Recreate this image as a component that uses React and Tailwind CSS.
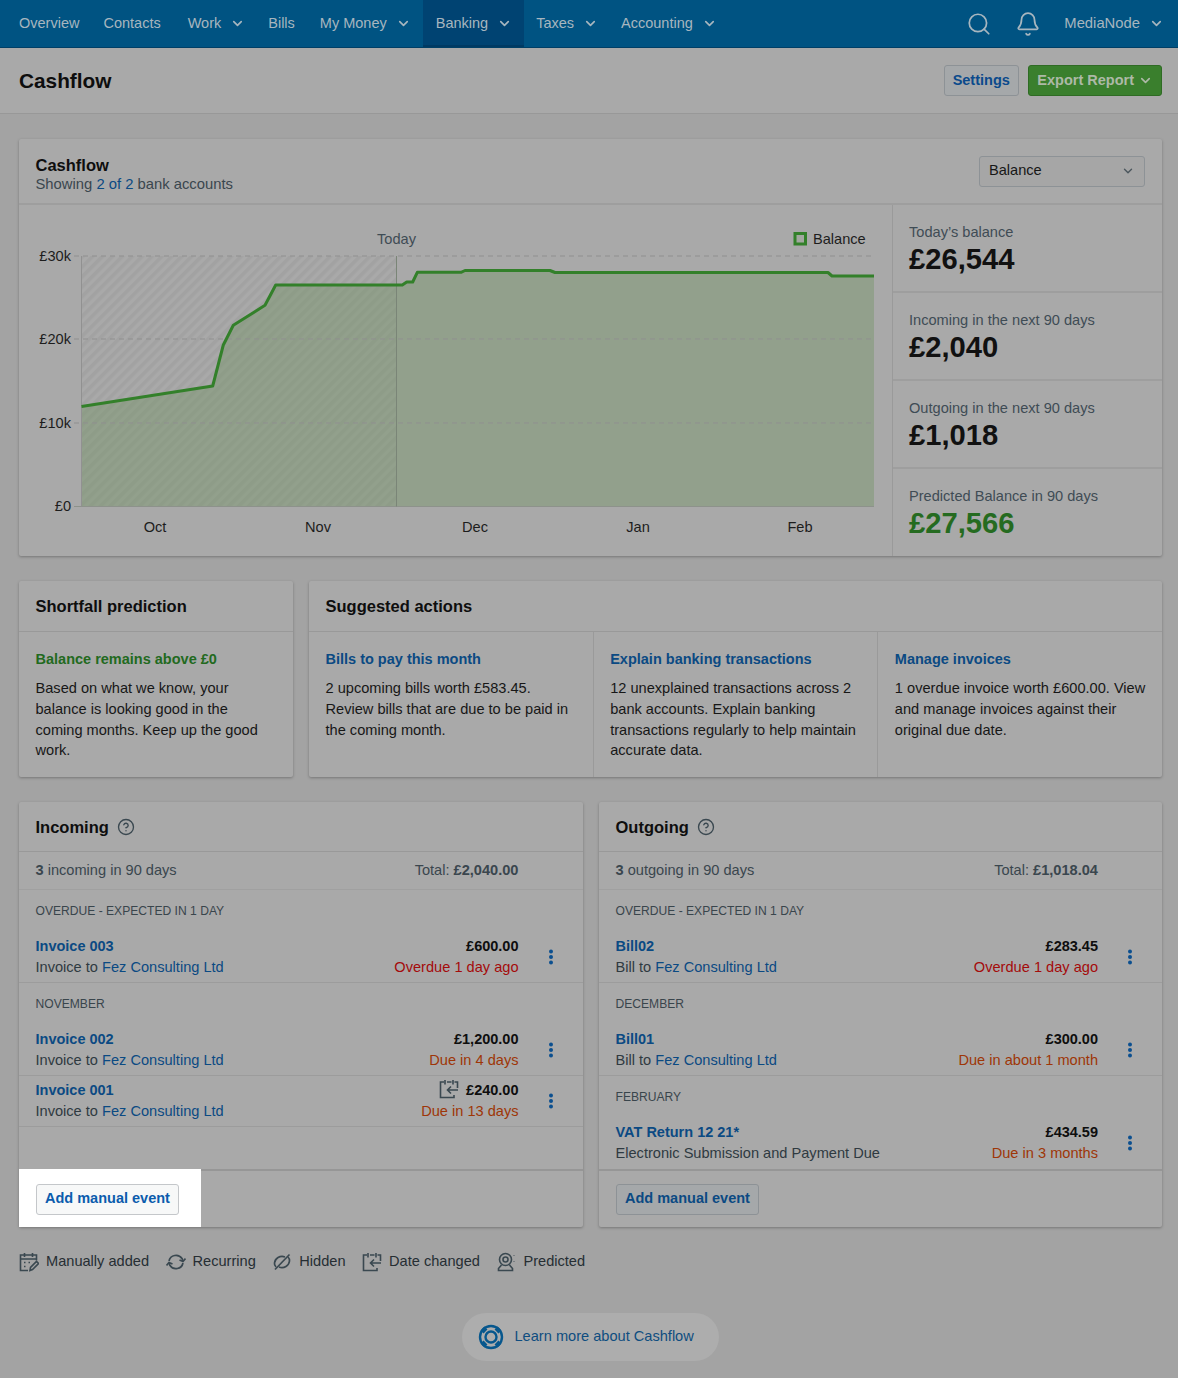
import React from "react";
import { ChevronDown, Search, Bell, CircleHelp } from "lucide-react";

const Chev = ({ className = "" }) => (
  <ChevronDown className={`w-[15px] h-[15px] ${className}`} strokeWidth={2.6} />
);

const NavItem = ({ label, chevron, active, className = "" }) => (
  <div className={`flex items-center h-full px-[12.5px] ${active ? "bg-[#004372] shadow-[inset_0_-2px_0_#003a63]" : ""} ${className}`}>
    <span>{label}</span>
    {chevron && <Chev className="ml-[9px] -mr-[2px]" />}
  </div>
);

const Card = ({ className = "", children }) => (
  <div className={`bg-[#a9a9a9] rounded-[2px] shadow-[0_1px_3px_rgba(0,0,0,0.28)] ${className}`}>{children}</div>
);

const Stat = ({ label, value, green, last, className = "flex-1" }) => (
  <div className={`${className} px-4 pt-[18px] ${last ? "" : "border-b-2 border-[#9e9e9e]"}`}>
    <div className="leading-[18px] text-[#3f4c55]">{label}</div>
    <div className={`text-[29.2px] leading-[36px] font-bold ${green ? "text-[#256b20]" : "text-[#111]"}`}>{value}</div>
  </div>
);

const chartText = "fill-[#1d1d1d] text-[14.6px]";

const CashflowChart = () => (
  <svg viewBox="19 205 873 351" className="block w-[873px] h-[351px]" style={{ fontFamily: "Liberation Sans, Arial, sans-serif" }}>
    <defs>
      <pattern id="hatch" width="7" height="7" patternUnits="userSpaceOnUse" patternTransform="rotate(45)">
        <rect width="3.5" height="7" fill="#000" fillOpacity="0.045" />
      </pattern>
    </defs>
    <rect x="81.5" y="256" width="315" height="250.5" fill="url(#hatch)" />
    <path
      d="M81.5 406.5L212.7 386L223.3 345L233.3 325.3L265 305.3L275.7 285L402.3 285L406.7 282L412.7 282L417.3 272.3L461 272.3L465 270.5L550 270.5L555 272.5L828 272.5L832 276L874 276L874 506.5L81.5 506.5Z"
      fill="#739464"
      fillOpacity="0.42"
    />
    {[256, 339, 423].map((y) => (
      <line key={y} x1="74" x2="874" y1={y} y2={y} stroke="#8f8f8f" strokeDasharray="5 4" />
    ))}
    <line x1="74" x2="874" y1="506.5" y2="506.5" stroke="#8d928b" />
    <line x1="81.5" x2="81.5" y1="256" y2="506.5" stroke="#919191" />
    <line x1="396.5" x2="396.5" y1="256" y2="506.5" stroke="#7a8577" />
    <path
      d="M81.5 406.5L212.7 386L223.3 345L233.3 325.3L265 305.3L275.7 285L402.3 285L406.7 282L412.7 282L417.3 272.3L461 272.3L465 270.5L550 270.5L555 272.5L828 272.5L832 276L874 276"
      fill="none"
      stroke="#33802a"
      strokeWidth="3"
      strokeLinejoin="round"
    />
    <text x="71" y="261" textAnchor="end" className={chartText}>£30k</text>
    <text x="71" y="344" textAnchor="end" className={chartText}>£20k</text>
    <text x="71" y="428" textAnchor="end" className={chartText}>£10k</text>
    <text x="71" y="511" textAnchor="end" className={chartText}>£0</text>
    <text x="396.5" y="244" textAnchor="middle" className="fill-[#3f4c55] text-[14.6px]">Today</text>
    <rect x="795" y="233.5" width="10.5" height="10.5" fill="#a3a8a0" stroke="#33802a" strokeWidth="3" />
    <text x="813" y="244" className={chartText}>Balance</text>
    {[["Oct", 155], ["Nov", 318], ["Dec", 475], ["Jan", 638], ["Feb", 800]].map(([m, x]) => (
      <text key={m} x={x} y="532" textAnchor="middle" className={chartText}>{m}</text>
    ))}
  </svg>
);

const Action = ({ title, text, green, border, className = "" }) => (
  <div className={`flex-1 pl-[16.5px] pr-4 pt-[17px] pb-[16px] ${border ? "border-l border-[#9a9a9a]" : ""} ${className}`}>
    <div className={`text-[14.5px] leading-[21px] font-bold ${green ? "text-[#226a1e]" : "text-[#0b4a83]"}`}>{title}</div>
    <p className="mt-[8px] leading-[20.8px] text-[#171717]">{text}</p>
  </div>
);

const Dots = () => (
  <svg viewBox="0 0 6 16" className="w-[6px] h-[16px] fill-[#0b4f8f]">
    <circle cx="3" cy="2.5" r="2" />
    <circle cx="3" cy="8" r="2" />
    <circle cx="3" cy="13.5" r="2" />
  </svg>
);

const CalendarChange = ({ className = "" }) => (
  <svg viewBox="0 0 20 20" fill="none" stroke="#3a4850" strokeWidth="1.6" className={className}>
    <path d="M5 3H1.5v15.500H15V16" />
    <path d="M18.500 9V3H15.500M8 3h4.500" />
    <path d="M6 1v4.500M14 1v4.500" />
    <path d="M19 11H8.500M12 7.500L8.500 11l3.500 3.500" />
  </svg>
);

const Row = ({ name, pre, to, amount, due, overdue, changed, last }) => (
  <div className={`flex items-start pt-[4px] pb-[4px] pl-[16.5px] ${last ? "" : "border-b border-[#9c9c9c]"}`}>
    <div className="flex-1 leading-[21px]">
      <div className="text-[14.5px] font-bold text-[#0b4a83]">{name}</div>
      <div className="text-[#2f3a41]">
        {pre}
        {to && <span className="text-[#0b4a83]">{to}</span>}
      </div>
    </div>
    <div className="text-right leading-[21px]">
      <div className="flex items-center justify-end gap-[7px] text-[14.5px] font-bold text-[#0e0e0e]">
        {changed && <CalendarChange className="w-[20px] h-[20px] -mt-[3px]" />}
        {amount}
      </div>
      <div className={overdue ? "text-[#a40b0b]" : "text-[#9e3607]"}>{due}</div>
    </div>
    <div className="w-[64px] h-[42px] flex items-center justify-center">
      <Dots />
    </div>
  </div>
);

const Group = ({ children }) => (
  <div className="h-[42px] pt-[11px] pl-[16.5px] text-[12.1px] leading-[20px] text-[#39454c]">{children}</div>
);

const EventCard = ({ title, summary, total, children, highlight }) => (
  <Card className="flex flex-col h-[425px]">
    <div className="h-[50px] pt-[1px] flex items-center gap-[8px] pl-[16.5px] border-b border-[#999]">
      <h3 className="text-[16.5px] font-bold text-[#0e0e0e]">{title}</h3>
      <CircleHelp className="w-[18px] h-[18px] text-[#3a4850]" strokeWidth={1.8} />
    </div>
    <div className="h-[38px] pt-[1px] flex items-center justify-between pl-[16.5px] pr-[64px] border-b border-[#a0a0a0] text-[#3a464e]">
      <span>{summary}</span>
      <span>
        Total: <b>{total}</b>
      </span>
    </div>
    <div className="flex-1">{children}</div>
    <div className="h-[58px] flex border-t-2 border-[#969696]">
      <div className={`h-[58px] -mt-[2px] pt-[2px] pl-[16.5px] pr-[22px] flex items-center ${highlight ? "bg-white" : ""}`}>
        <button
          className={`h-[31px] px-[8.5px] rounded-[3px] border text-[14.5px] font-bold ${
            highlight
              ? "bg-[#f7f8f8] border-[#c4c7ca] text-[#0b5cad]"
              : "bg-[#a5a8aa] border-[#8d9296] text-[#0b4a83]"
          }`}
        >
          Add manual event
        </button>
      </div>
    </div>
  </Card>
);

const legendIcon = "w-[20px] h-[20px]";

const Legend = ({ icon, label }) => (
  <div className="flex items-center gap-[7px]">
    {icon}
    <span>{label}</span>
  </div>
);

const RecurringIcon = () => (
  <svg viewBox="0 0 20 20" fill="none" stroke="#3a4850" strokeWidth="1.7" className={legendIcon}>
    <path d="M3 9a7.200 7.200 0 0 1 13-2.500l1 2.500" />
    <path d="M19.500 6.500L17 9.500l-3.500-1.500" />
    <path d="M17 11a7.200 7.200 0 0 1-13 2.500L3 11" />
    <path d="M.5 13.500L3 10.500l3.500 1.500" />
  </svg>
);

const HiddenIcon = () => (
  <svg viewBox="0 0 20 20" fill="none" stroke="#3a4850" strokeWidth="1.7" className={legendIcon}>
    <path d="M13 5C8 3 3 6.500 2.500 11c-.2 1.500.5 3 1.500 4" />
    <path d="M7 15c5 2 10-1.500 10.500-6 .2-1.500-.5-3-1.500-4" />
    <path d="M17.500 2.500L3 17.500" />
  </svg>
);

const ManualIcon = () => (
  <svg viewBox="0 0 20 20" fill="none" stroke="#3a4850" strokeWidth="1.6" className={legendIcon}>
    <path d="M9 18.500H1.500V3h16v5.500" />
    <path d="M5.500 1v4M13.500 1v4M1.500 7h16" />
    <path d="M5 10.500h1.500M5 14.500h1.500M9.500 10.500H11" />
    <path d="M11 18.500l.5-3 6-6 2 2-6 6z" />
  </svg>
);

const PredictedIcon = () => (
  <svg viewBox="0 0 20 20" fill="none" stroke="#3a4850" strokeWidth="1.6" className={legendIcon}>
    <circle cx="9.500" cy="7.500" r="6" />
    <circle cx="9.500" cy="7.500" r="2.500" />
    <path d="M5.500 13l-3 3.500V18.500h14V16.500l-3-3.500" />
    <path d="M18 3.500v.5M18 9v.5" />
  </svg>
);

const BuoyIcon = () => (
  <svg viewBox="0 0 26 26" fill="none" stroke="#07578d" className="w-[26px] h-[26px] shrink-0">
    <circle cx="13" cy="13" r="11" strokeWidth="2.4" />
    <circle cx="13" cy="13" r="5.500" strokeWidth="2.400" />
    <path d="M7.500 7.500L4.500 4.500M18.500 7.500l3-3M7.500 18.500l-3 3M18.500 18.500l3 3" strokeWidth="5.500" />
  </svg>
);

export default function App() {
  return (
    <div
      className="min-h-[1378px] bg-[#a3a3a3] text-[14.6px] text-[#171717]"
      style={{ fontFamily: "Liberation Sans, Arial, sans-serif" }}
    >
      {/* Top nav */}
      <nav className="h-[48px] bg-[#005382] border-b border-[#003f66] flex items-center justify-between pl-[6.5px] pr-[16px] text-[14.5px] text-[#a7b6bf]">
        <div className="flex items-center h-full">
          <NavItem label="Overview" className="-mr-[1px]" />
          <NavItem label="Contacts" className="mr-[2px]" />
          <NavItem label="Work" chevron />
          <NavItem label="Bills" />
          <NavItem label="My Money" chevron className="mr-[2px]" />
          <NavItem label="Banking" chevron active className="pr-[13.5px]" />
          <NavItem label="Taxes" chevron />
          <NavItem label="Accounting" chevron />
        </div>
        <div className="flex items-center">
          <Search className="w-[26px] h-[26px]" strokeWidth={1.6} />
          <Bell className="w-[26px] h-[26px] ml-[23px]" strokeWidth={1.6} />
          <span className="ml-[23px] text-[14.8px]">MediaNode</span>
          <Chev className="ml-[9px] -mr-[2px]" />
        </div>
      </nav>

      {/* Page header */}
      <div className="h-[66px] bg-[#a9a9a9] border-b border-[#989898] flex items-center justify-between pl-[19px] pr-[16px]">
        <h1 className="text-[20.8px] font-bold text-[#0e0e0e]">Cashflow</h1>
        <div className="flex items-center gap-[9px] text-[14.5px]">
          <button className="h-[31px] px-[8px] rounded-[3px] border border-[#8d9296] bg-[#a5a8aa] font-bold text-[#0b4a8c]">
            Settings
          </button>
          <button className="h-[31px] pl-[8.5px] pr-[8px] rounded-[3px] border border-[#2f6b24] bg-[#3a7f2d] font-bold text-[#adb9a7] flex items-center gap-[4px]">
            Export Report
            <Chev />
          </button>
        </div>
      </div>

      <main className="pl-[19px] pr-[16px] pt-[25px]">
        {/* Cashflow chart */}
        <Card>
          <div className="h-[66px] flex items-center justify-between pl-[16.5px] pr-[17px] border-b-2 border-[#9e9e9e]">
            <div className="pt-[5px]">
              <h2 className="text-[16.5px] leading-[20px] font-bold text-[#0e0e0e]">Cashflow</h2>
              <div className="leading-[18px] text-[14.8px] text-[#3a464e]">
                Showing <span className="text-[#0b4a83]">2 of 2</span> bank accounts
              </div>
            </div>
            <div className="w-[166px] h-[31px] flex items-center justify-between pl-[9px] pr-[9px] rounded-[3px] border border-[#8d9296] bg-[#a6a6a6] text-[#171717]">
              Balance
              <ChevronDown className="w-[14px] h-[14px] text-[#4b565d]" strokeWidth={2.4} />
            </div>
          </div>
          <div className="flex h-[351px]">
            <CashflowChart />
            <div className="flex-1 flex flex-col border-l border-[#9a9a9a]">
              <Stat label="Today’s balance" value="£26,544" className="h-[88px]" />
              <Stat label="Incoming in the next 90 days" value="£2,040" className="h-[88px]" />
              <Stat label="Outgoing in the next 90 days" value="£1,018" className="h-[88px]" />
              <Stat label="Predicted Balance in 90 days" value="£27,566" green last className="h-[87px]" />
            </div>
          </div>
        </Card>

        {/* Prediction and suggestions */}
        <div className="mt-[25px] flex gap-[16px]">
          <Card className="w-[274px] shrink-0">
            <h3 className="h-[51px] flex items-center pl-[16.5px] text-[16.5px] font-bold text-[#0e0e0e] border-b border-[#999]">
              Shortfall prediction
            </h3>
            <Action
              green
              className="pr-[24px]"
              title="Balance remains above £0"
              text="Based on what we know, your balance is looking good in the coming months. Keep up the good work."
            />
          </Card>
          <Card className="flex-1">
            <h3 className="h-[51px] flex items-center pl-[16.5px] text-[16.5px] font-bold text-[#0e0e0e] border-b border-[#999]">
              Suggested actions
            </h3>
            <div className="flex">
              <Action
                title="Bills to pay this month"
                text="2 upcoming bills worth £583.45. Review bills that are due to be paid in the coming month."
              />
              <Action
                border
                title="Explain banking transactions"
                text="12 unexplained transactions across 2 bank accounts. Explain banking transactions regularly to help maintain accurate data."
              />
              <Action
                border
                title="Manage invoices"
                text="1 overdue invoice worth £600.00. View and manage invoices against their original due date."
              />
            </div>
          </Card>
        </div>

        {/* Incoming / Outgoing */}
        <div className="mt-[25px] grid grid-cols-[563.5px_1fr] gap-[16.5px]">
          <EventCard highlight title="Incoming" summary={<><b>3</b> incoming in 90 days</>} total="£2,040.00">
            <Group>OVERDUE - EXPECTED IN 1 DAY</Group>
            <Row name="Invoice 003" pre="Invoice to " to="Fez Consulting Ltd" amount="£600.00" due="Overdue 1 day ago" overdue />
            <Group>NOVEMBER</Group>
            <Row name="Invoice 002" pre="Invoice to " to="Fez Consulting Ltd" amount="£1,200.00" due="Due in 4 days" />
            <Row name="Invoice 001" pre="Invoice to " to="Fez Consulting Ltd" amount="£240.00" due="Due in 13 days" changed />
          </EventCard>
          <EventCard title="Outgoing" summary={<><b>3</b> outgoing in 90 days</>} total="£1,018.04">
            <Group>OVERDUE - EXPECTED IN 1 DAY</Group>
            <Row name="Bill02" pre="Bill to " to="Fez Consulting Ltd" amount="£283.45" due="Overdue 1 day ago" overdue />
            <Group>DECEMBER</Group>
            <Row name="Bill01" pre="Bill to " to="Fez Consulting Ltd" amount="£300.00" due="Due in about 1 month" />
            <Group>FEBRUARY</Group>
            <Row last name="VAT Return 12 21*" pre="Electronic Submission and Payment Due" amount="£434.59" due="Due in 3 months" />
          </EventCard>
        </div>

        {/* Icon legend */}
        <div className="mt-[24px] flex items-center gap-[16.5px] text-[#262e33]">
          <Legend label="Manually added" icon={<ManualIcon />} />
          <Legend label="Recurring" icon={<RecurringIcon />} />
          <Legend label="Hidden" icon={<HiddenIcon />} />
          <Legend label="Date changed" icon={<CalendarChange className={legendIcon} />} />
          <Legend label="Predicted" icon={<PredictedIcon />} />
        </div>

        {/* Help link */}
        <div className="mt-[40px] flex justify-center pr-[1px]">
          <a className="h-[48px] w-[257px] rounded-full bg-[#adadad] flex items-center pl-[16px] gap-[11px] text-[#0f4d80]">
            <BuoyIcon />
            Learn more about Cashflow
          </a>
        </div>
      </main>
    </div>
  );
}
